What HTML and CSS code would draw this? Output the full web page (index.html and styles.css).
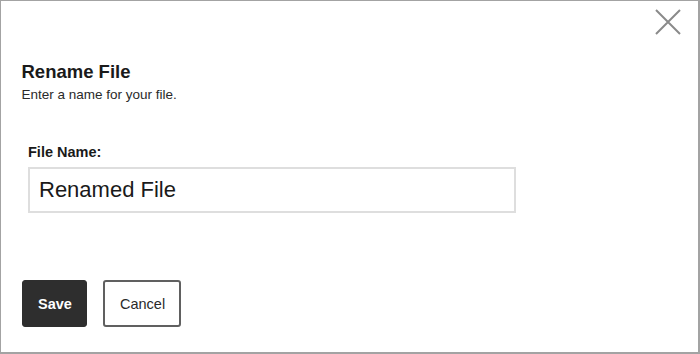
FILE: index.html
```html
<!DOCTYPE html>
<html lang="en">
<head>
<meta charset="utf-8">
<title>Rename File</title>
<link rel="stylesheet" href="styles.css">
</head>
<body>
<div class="dialog">
  <button class="close" aria-label="Close">
    <svg width="28" height="28" viewBox="0 0 28 28"><path d="M2 2 L26 26 M26 2 L2 26" stroke="#8a8a8a" stroke-width="2" fill="none"/></svg>
  </button>
  <div class="header">
    <h2 class="title">Rename File</h2>
    <p class="subtitle">Enter a name for your file.</p>
  </div>
  <div class="field">
    <label class="label" for="fname">File Name:</label>
    <input class="input" id="fname" type="text" value="Renamed File">
  </div>
  <div class="actions">
    <button class="btn btn-primary">Save</button>
    <button class="btn btn-secondary">Cancel</button>
  </div>
</div>
</body>
</html>
```

FILE: styles.css
```css
* { box-sizing: border-box; }
html, body { margin: 0; padding: 0; background: #fff; }
body { font-family: "Liberation Sans", Arial, sans-serif; color: #1c1c1c; }

.dialog {
  position: relative;
  width: 700px;
  height: 354px;
  border: 1px solid #a3a3a3;
  border-right-width: 2px;
  border-bottom-width: 2px;
  background: #fff;
  display: flex;
  flex-direction: column;
}

.close {
  position: absolute;
  top: 7px;
  right: 16px;
  width: 28px;
  height: 28px;
  padding: 0;
  border: 0;
  background: transparent;
  cursor: pointer;
}
.close svg { display: block; }

.header { padding: 59.5px 0 0 20.5px; }
.title {
  margin: 0;
  font-size: 18.5px;
  line-height: 1.2;
  font-weight: bold;
  color: #1a1a1a;
}
.subtitle {
  margin: 4.5px 0 0;
  font-size: 13.5px;
  line-height: 1.2;
  color: #2a2a2a;
}

.field {
  margin: 40.5px 0 0 27px;
  display: flex;
  flex-direction: column;
  align-items: flex-start;
}
.label {
  font-size: 14.5px;
  line-height: 1.2;
  font-weight: bold;
  color: #1a1a1a;
}
.input {
  margin-top: 6px;
  width: 488px;
  height: 46px;
  border: 2px solid #dedede;
  padding: 0 9px;
  font-family: "Liberation Sans", Arial, sans-serif;
  font-size: 22px;
  color: #1a1a1a;
  background: #fff;
  outline: none;
}

.actions {
  margin: 67px 0 0 21px;
  display: flex;
  gap: 16px;
}
.btn {
  height: 47px;
  padding: 0 15px;
  border-radius: 3px;
  font-family: "Liberation Sans", Arial, sans-serif;
  font-size: 14.5px;
  cursor: pointer;
}
.btn-primary {
  width: 65px;
  background: #2e2e2e;
  border: 1px solid #2e2e2e;
  color: #fff;
  font-weight: bold;
}
.btn-secondary {
  width: 78px;
  background: #fff;
  border: 2px solid #606060;
  color: #2a2a2a;
}
```
